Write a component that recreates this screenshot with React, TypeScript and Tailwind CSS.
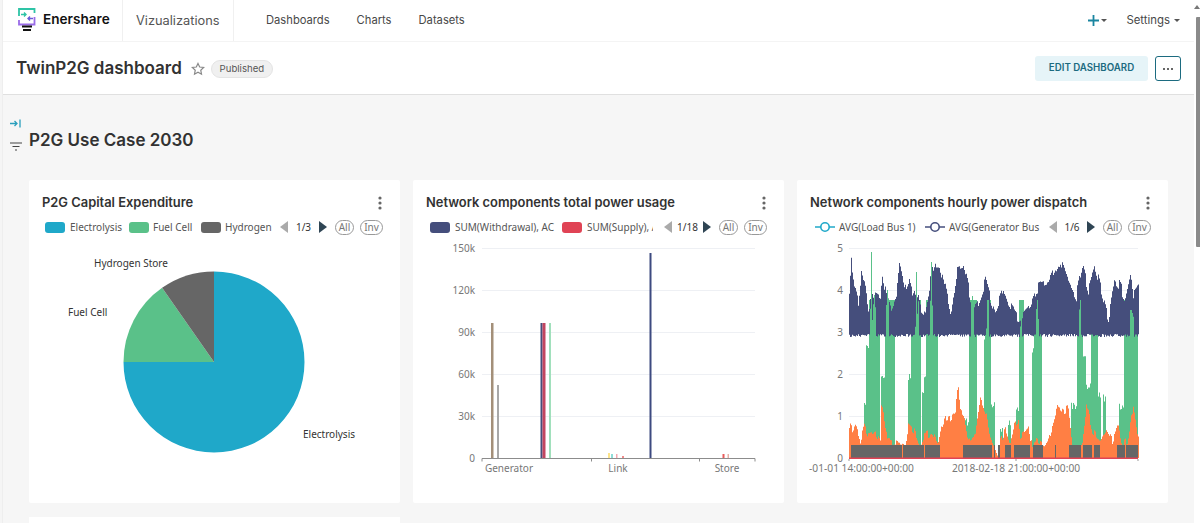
import React from "react";

const sans = "font-[Inter,sans-serif]";
const LABEL = "'Noto Sans',sans-serif";

function rnd(i: number, s = 1) {
  const v = Math.sin(i * 12.9898 * s + s * 78.233) * 43758.5453;
  return v - Math.floor(v);
}
function lerp(keys: number[][], x: number) {
  for (let i = 0; i < keys.length - 1; i++) {
    if (x >= keys[i][0] && x <= keys[i + 1][0]) {
      const t = (x - keys[i][0]) / (keys[i + 1][0] - keys[i][0] || 1);
      return keys[i][1] + (keys[i + 1][1] - keys[i][1]) * t;
    }
  }
  return keys[keys.length - 1][1];
}
const X0 = 849;
const X1 = 1138;
const Y0 = 458;

const navyKeys = [
  [849, 300], [851, 264], [854, 285], [858, 300], [861, 270], [865, 288], [868, 310], [875, 292], [880, 296],
  [882, 270], [886, 296], [890, 310], [896, 296], [899, 266], [904, 290], [908, 280], [912, 295], [916, 286], [920, 305],
  [925, 310], [931, 276], [935, 262], [939, 262], [945, 290], [950, 315], [957, 266], [962, 264], [967, 285], [972, 308],
  [978, 300], [985, 280], [990, 296], [995, 310], [1003, 290], [1008, 305], [1012, 312], [1018, 320], [1030, 305], [1036, 290],
  [1048, 285], [1060, 258], [1068, 280], [1076, 296], [1082, 268], [1088, 290], [1095, 268], [1102, 296], [1108, 318], [1114, 280],
  [1118, 285], [1124, 296], [1130, 268], [1133, 296], [1138, 290],
];
const greenBlocks = [
  [869, 879], [885, 894], [911, 920], [926, 937], [969, 976], [985, 990],
  [1019, 1023], [1034, 1041], [1077, 1082], [1091, 1097], [1124, 1137],
];
const greenSpikes = [
  [870, 876, 252], [886, 889, 290], [915, 919, 272], [930, 933, 262], [971, 974, 296], [986, 989, 300],
  [1020, 1022, 305], [1036, 1039, 300], [1079, 1081, 300], [1130, 1134, 310],
];
const greenLow = [
  [864, 868, 400], [866, 868, 345], [881, 884, 372], [908, 910, 372], [922, 925, 392], [924, 925, 376],
  [964, 968, 418], [984, 985, 335], [991, 994, 402], [1000, 1002, 425], [1008, 1010, 420], [1016, 1018, 405],
  [1032, 1033, 345], [1071, 1076, 402], [1083, 1085, 355], [1086, 1090, 382], [1098, 1100, 392], [1103, 1105, 394], [1119, 1123, 402],
];
const orangeKeys = [
  [849, 425], [852, 430], [855, 425], [860, 440], [864, 425], [868, 435], [875, 432], [880, 440], [881, 405], [884, 420],
  [887, 440], [905, 445], [908, 425], [914, 430], [920, 445], [924, 436], [932, 432], [938, 445], [941, 430], [945, 420],
  [950, 418], [955, 412], [958, 385], [960, 410], [964, 415], [968, 440], [975, 435], [980, 400], [986, 415], [990, 440],
  [997, 458], [1000, 440], [1005, 430], [1010, 445], [1014, 425], [1018, 420], [1020, 438], [1028, 430], [1030, 445], [1036, 440],
  [1044, 445], [1048, 440], [1054, 420], [1058, 405], [1064, 410], [1068, 408], [1072, 445], [1076, 458], [1082, 440], [1086, 405],
  [1092, 430], [1100, 440], [1106, 430], [1112, 440], [1118, 425], [1122, 445], [1128, 440], [1133, 405], [1138, 440],
];
const greyBlocks = [
  [851, 902], [903, 924], [925, 940], [963, 992], [994, 995], [998, 1000], [1005, 1011], [1014, 1030], [1033, 1043],
  [1055, 1056], [1069, 1081], [1083, 1092], [1094, 1100], [1117, 1125], [1126, 1138],
];

function columns(fn: (x: number) => number) {
  let d = "";
  for (let x = X0; x <= X1; x++) {
    d += `M${x} ${Y0}V${fn(x).toFixed(1)}h1V${Y0}z`;
  }
  return d;
}
const navyPath = (() => {
  let d = "";
  for (let x = X0; x <= X1; x++) {
    const noise = (rnd(Math.floor(x / 3), 2) - 0.5) * 14;
    const top = lerp(navyKeys, x) + noise;
    const bot = 334 + rnd(x, 3) * 3;
    d += `M${x} ${bot.toFixed(1)}V${Math.min(top, 322).toFixed(1)}h1V${bot.toFixed(1)}z`;
  }
  return d;
})();
const greenBase = columns((x) => {
  let top = Y0;
  for (const [a, b] of greenBlocks) if (x >= a && x <= b) top = Math.min(top, 300);
  for (const [a, b, h] of greenLow) if (x >= a && x <= b) top = Math.min(top, h + rnd(x, 4) * 8);
  return top;
});
const greenTop = greenSpikes
  .map(([a, b, h]) => {
    let d = "";
    for (let x = a; x < b; x++) {
      const top = x === a + 1 ? h : Math.max(h, 292 + rnd(x, 9) * 40);
      d += `M${x} 340V${top.toFixed(1)}h1V340z`;
    }
    return d;
  })
  .join("");
const orangePath = columns((x) => {
  const y = lerp(orangeKeys, x) + (rnd(Math.floor(x / 2), 7) - 0.5) * 8;
  return Math.min(Y0, y);
});

function Kebab() {
  return (
    <svg width="4" height="14" viewBox="0 0 4 14" className="shrink-0">
      <circle cx="2" cy="2" r="1.6" fill="#666" />
      <circle cx="2" cy="7" r="1.6" fill="#666" />
      <circle cx="2" cy="12" r="1.6" fill="#666" />
    </svg>
  );
}

function Swatch({ color }: { color: string }) {
  return <span className="w-5 h-[11px] rounded-[3px] shrink-0" style={{ background: color }} />;
}

function LineMark({ color }: { color: string }) {
  return (
    <svg width="20" height="12" viewBox="0 0 20 12" className="shrink-0">
      <path d="M0 6H20" stroke={color} strokeWidth="1.6" />
      <circle cx="10" cy="6" r="4.2" fill="#fff" stroke={color} strokeWidth="1.6" />
    </svg>
  );
}

function Pager({ label, w }: { label: string; w: string }) {
  return (
    <div className="flex items-center text-[10px] text-[#333] shrink-0">
      <svg width="8" height="12" viewBox="0 0 8 12" className="shrink-0">
        <path d="M8 0V12L0 6z" fill="#aaa" />
      </svg>
      <span className={`${w} text-center`}>{label}</span>
      <svg width="8" height="12" viewBox="0 0 8 12" className="shrink-0">
        <path d="M0 0V12L8 6z" fill="#2f4554" />
      </svg>
      <span className="ml-[8px] w-[19px] h-[15px] rounded-full border border-[#999] text-[#777] text-[10px] leading-[13px] text-center">All</span>
      <span className="ml-[6px] w-[23px] h-[15px] rounded-full border border-[#999] text-[#777] text-[10px] leading-[13px] text-center">Inv</span>
    </div>
  );
}

function Card({ title, legend, children }: { title: string; legend: React.ReactNode; children: React.ReactNode }) {
  return (
    <section className="w-[371px] h-[323px] bg-white rounded-[2px] shrink-0 overflow-hidden flex flex-col">
      <header className="h-[39px] pl-[13px] pr-[18px] pt-[14px] flex justify-between items-start shrink-0">
        <h3 className="text-[12.9px] leading-[17px] font-semibold text-[#323232]">{title}</h3>
        <span className="pt-[2px]">
          <Kebab />
        </span>
      </header>
      <div className="h-[16px] mb-[5px] flex items-center font-['Noto_Sans',sans-serif] text-[10px] text-[#555] shrink-0">{legend}</div>
      {children}
    </section>
  );
}

function Logo() {
  return (
    <svg width="18" height="24" viewBox="0 0 18 24" className="shrink-0">
      <path d="M16.5 5V1H1v7" fill="none" stroke="#2ec4a6" strokeWidth="1.8" />
      <path d="M1 12v4.5H16.5V9" fill="none" stroke="#9a6ce8" strokeWidth="1.8" />
      <path d="M3 6.5H8M6 4.5l2 2-2 2" fill="none" stroke="#2ec4a6" strokeWidth="1.4" />
      <path d="M15 10.5H10M12 8.5l-2 2 2 2" fill="none" stroke="#6b5bd6" strokeWidth="1.4" />
      <path d="M4 18.5H14M5 22H13" stroke="#111" strokeWidth="1.8" />
    </svg>
  );
}

function PieChart() {
  const cx = 214;
  const cy = 362;
  const r = 90.5;
  const pt = (deg: number) => {
    const a = (deg * Math.PI) / 180;
    return `${(cx + r * Math.sin(a)).toFixed(2)} ${(cy - r * Math.cos(a)).toFixed(2)}`;
  };
  const slice = (a: number, b: number) => `M${cx} ${cy}L${pt(a)}A${r} ${r} 0 ${b - a > 180 ? 1 : 0} 1 ${pt(b)}z`;
  return (
    <svg viewBox="29 240 371 263" width="371" height="263" className="shrink-0">
      <path d={slice(0, 270)} fill="#1FA8C9" />
      <path d={slice(270, 325)} fill="#5AC189" />
      <path d={slice(325, 360)} fill="#666666" />
      <g fontFamily={LABEL} fontSize="10" fill="#333">
        <text x="94" y="266.5">Hydrogen Store</text>
        <text x="68" y="316">Fuel Cell</text>
        <text x="303" y="437.5">Electrolysis</text>
      </g>
    </svg>
  );
}

function BarChart() {
  const ticks: [string, number][] = [["150k", 248.5], ["120k", 290.5], ["90k", 332.5], ["60k", 374.5], ["30k", 416.5]];
  const bars: [number, number, number, string][] = [
    [491, 2.5, 323, "#A38F79"], [497, 2, 385, "#A8A8A8"], [540.5, 2, 323, "#454E7C"], [542.5, 3, 323, "#C24560"],
    [549, 2, 323, "#A1E0BC"], [608, 2, 453, "#FCE38A"], [611, 2, 454, "#8FDDD8"], [616, 1.5, 454, "#F4A9B0"],
    [622, 2, 456, "#F08A8A"], [649.5, 2, 253, "#3D4A80"], [722.5, 2, 454, "#E85D5D"], [727.5, 1.5, 454, "#E8B0A8"],
  ];
  return (
    <svg viewBox="413 240 371 263" width="371" height="263" className="shrink-0">
      {ticks.map(([t, y]) => (
        <g key={t}>
          <path d={`M482 ${y}H755`} stroke="#eef0f4" />
          <text x="475" y={y + 3} textAnchor="end" fontFamily={LABEL} fontSize="10" fill="#777">{t}</text>
        </g>
      ))}
      <text x="475" y="461.5" textAnchor="end" fontFamily={LABEL} fontSize="10" fill="#777">0</text>
      {bars.map(([x, w, y, c]) => (
        <rect key={x} x={x} y={y} width={w} height={458.5 - y} fill={c} />
      ))}
      <path d="M482 458.5H755M482 458.5v3M591.5 458.5v3M699.5 458.5v3M755 458.5v3" stroke="#8c8c8c" strokeWidth="1" fill="none" />
      <g fontFamily={LABEL} fontSize="10" fill="#777">
        <text x="509" y="472" textAnchor="middle">Generator</text>
        <text x="618" y="472" textAnchor="middle">Link</text>
        <text x="727" y="472" textAnchor="middle">Store</text>
      </g>
    </svg>
  );
}

function LineChart() {
  const ticks = [["5", 248.5], ["4", 290.5], ["3", 332.5], ["2", 374.5], ["1", 416.5]] as [string, number][];
  return (
    <svg viewBox="797 240 372 263" width="372" height="263" className="shrink-0">
      {ticks.map(([t, y]) => (
        <g key={t}>
          <path d={`M849 ${y}H1138`} stroke="#eef0f4" />
          <text x="843" y={y + 3} textAnchor="end" fontFamily={LABEL} fontSize="10" fill="#777">{t}</text>
        </g>
      ))}
      <text x="843" y="461.5" textAnchor="end" fontFamily={LABEL} fontSize="10" fill="#777">0</text>
      <path d={greenBase} fill="#5AC189" />
      <path d={navyPath} fill="#454E7C" />
      <path d={greenTop} fill="#5AC189" />
      <path d={orangePath} fill="#FF7F44" />
      {greyBlocks.map(([a, b]) => (
        <rect key={a} x={a} y="445" width={b - a} height="13" fill="#666666" />
      ))}
      <path d="M849 458.3H1138" stroke="#E04355" strokeWidth="1.4" />
      <path d="M849 459v2M1016 459v2M1138 459v2" stroke="#999" />
      <g fontFamily={LABEL} fontSize="10.2" fill="#777">
        <text x="861.5" y="472" textAnchor="middle">-01-01 14:00:00+00:00</text>
        <text x="1016" y="472" textAnchor="middle">2018-02-18 21:00:00+00:00</text>
      </g>
    </svg>
  );
}

export default function App() {
  return (
    <div className={`${sans} relative w-[1200px] h-[523px] overflow-hidden bg-white flex flex-col`}>
      <nav className="h-[42px] shrink-0 flex items-stretch border-b border-[#f4f4f4] pl-[3px] pr-[20px] text-[#484848]">
        <div className="w-[120px] border-r border-[#f0f0f0] flex items-center pl-[15px] gap-[7px] pb-[2px]">
          <Logo />
          <span className="text-[13.6px] font-semibold text-[#111]">Enershare</span>
        </div>
        <div className="w-[111px] border-r border-[#f0f0f0] pl-[13px] flex items-center text-[12.8px] text-[#555]">Vizualizations</div>
        <div className="flex items-center text-[11.2px] gap-[27px] pl-[32px] flex-1">
          <span>Dashboards</span>
          <span>Charts</span>
          <span>Datasets</span>
        </div>
        <div className="flex items-center text-[11.4px]">
          <svg width="11" height="11" viewBox="0 0 11 11">
            <path d="M5.5 0V11M0 5.5H11" stroke="#1a85a0" strokeWidth="1.8" />
          </svg>
          <span className="ml-[2px] w-0 h-0 border-x-[3px] border-x-transparent border-t-[3px] border-t-[#555]" />
          <span className="ml-[19px]">Settings</span>
          <span className="ml-[4px] w-0 h-0 border-x-[3px] border-x-transparent border-t-[3px] border-t-[#555]" />
        </div>
      </nav>

      <div className="h-[53px] shrink-0 flex items-center border-b border-[#e0e0e0] pl-[16px] pr-[19px] pt-[1px]">
        <h1 className="text-[17px] font-semibold text-[#323232]">TwinP2G dashboard</h1>
        <svg width="14" height="14" viewBox="0 0 24 24" className="ml-[9px]" fill="none" stroke="#888" strokeWidth="2">
          <path d="M12 2.5l2.9 6.2 6.8.8-5 4.6 1.3 6.7-6-3.4-6 3.4 1.3-6.7-5-4.6 6.8-.8z" />
        </svg>
        <span className="ml-[6px] w-[62px] h-[18px] rounded-full bg-[#f0f0f0] border border-[#e4e4e4] text-[9.6px] leading-[16px] text-center text-[#555]">Published</span>
        <div className="ml-auto flex items-center gap-[7px]">
          <button className="w-[113px] h-[25px] bg-[#e6f4f8] rounded-[3px] text-[9.7px] font-semibold text-[#1c6b80]">EDIT DASHBOARD</button>
          <button className="w-[26px] h-[25px] rounded-[3px] border border-[#1c6b80] flex items-center justify-center gap-[2px]">
            <span className="w-[2px] h-[2px] rounded-full bg-[#333]" />
            <span className="w-[2px] h-[2px] rounded-full bg-[#333]" />
            <span className="w-[2px] h-[2px] rounded-full bg-[#333]" />
          </button>
        </div>
      </div>

      <main className="flex-1 bg-[#f6f6f6] flex min-h-0">
        <aside className="w-[29px] shrink-0 pl-[10px] pt-[24px] flex flex-col gap-[14px]">
          <svg width="11" height="9" viewBox="0 0 11 9">
            <path d="M0 4.5H7M4.5 2l2.5 2.5L4.5 7M10 0.5V8.5" fill="none" stroke="#2a9fbd" strokeWidth="1.3" />
          </svg>
          <svg width="12" height="9" viewBox="0 0 12 9">
            <path d="M0 1H12M2.5 4.5H9.5M5 8H7" fill="none" stroke="#444" strokeWidth="1.2" />
          </svg>
        </aside>
        <div className="flex-1 min-w-0">
          <h2 className="h-[85px] pt-[33px] text-[17px] leading-[24px] font-semibold text-[#323232]">P2G Use Case 2030</h2>
          <div className="flex gap-[13px]">
            <Card
              title="P2G Capital Expenditure"
              legend={
                <>
                  <span className="ml-[16px] w-[84px] shrink-0 flex items-center gap-[5px]"><Swatch color="#1FA8C9" />Electrolysis</span>
                  <span className="w-[72px] shrink-0 flex items-center gap-[4px]"><Swatch color="#5AC189" />Fuel Cell</span>
                  <span className="w-[79px] shrink-0 flex items-center gap-[4px]"><Swatch color="#666666" />Hydrogen</span>
                  <Pager label="1/3" w="w-[31px]" />
                </>
              }
            >
              <PieChart />
            </Card>
            <Card
              title="Network components total power usage"
              legend={
                <>
                  <span className="ml-[17px] flex items-center gap-[5px] w-[132px] shrink-0 overflow-hidden whitespace-nowrap"><Swatch color="#454E7C" />SUM(Withdrawal), AC</span>
                  <span className="flex items-center gap-[5px] w-[91px] shrink-0 overflow-hidden whitespace-nowrap"><Swatch color="#E04355" />SUM(Supply), AC</span>
                  <span className="w-[11px] shrink-0" />
                  <Pager label="1/18" w="w-[31px]" />
                </>
              }
            >
              <BarChart />
            </Card>
            <Card
              title="Network components hourly power dispatch"
              legend={
                <>
                  <span className="ml-[18px] flex items-center gap-[4px] w-[110px] shrink-0 overflow-hidden whitespace-nowrap"><LineMark color="#1FA8C9" />AVG(Load Bus 1)</span>
                  <span className="flex items-center gap-[4px] w-[115px] shrink-0 overflow-hidden whitespace-nowrap"><LineMark color="#454E7C" />AVG(Generator Bus 1)</span>
                  <span className="w-[9px] shrink-0" />
                  <Pager label="1/6" w="w-[30px]" />
                </>
              }
            >
              <LineChart />
            </Card>
          </div>
          <div className="mt-[14px] w-[371px] h-[40px] bg-white" />
        </div>
      </main>

      <div className="absolute inset-y-0 left-0 w-[3px] bg-[#f5f5f5] border-r border-[#eeeeee]" />
      <div className="absolute inset-y-0 right-0 w-[6px] bg-white flex flex-col items-end">
        <span className="mt-[5px] w-0 h-0 border-x-[3px] border-x-transparent border-b-[4px] border-b-[#777]" />
        <span className="mt-[8px] w-[4px] h-[230px] bg-[#8a8a8a] rounded-l-[1px]" />
      </div>
    </div>
  );
}
